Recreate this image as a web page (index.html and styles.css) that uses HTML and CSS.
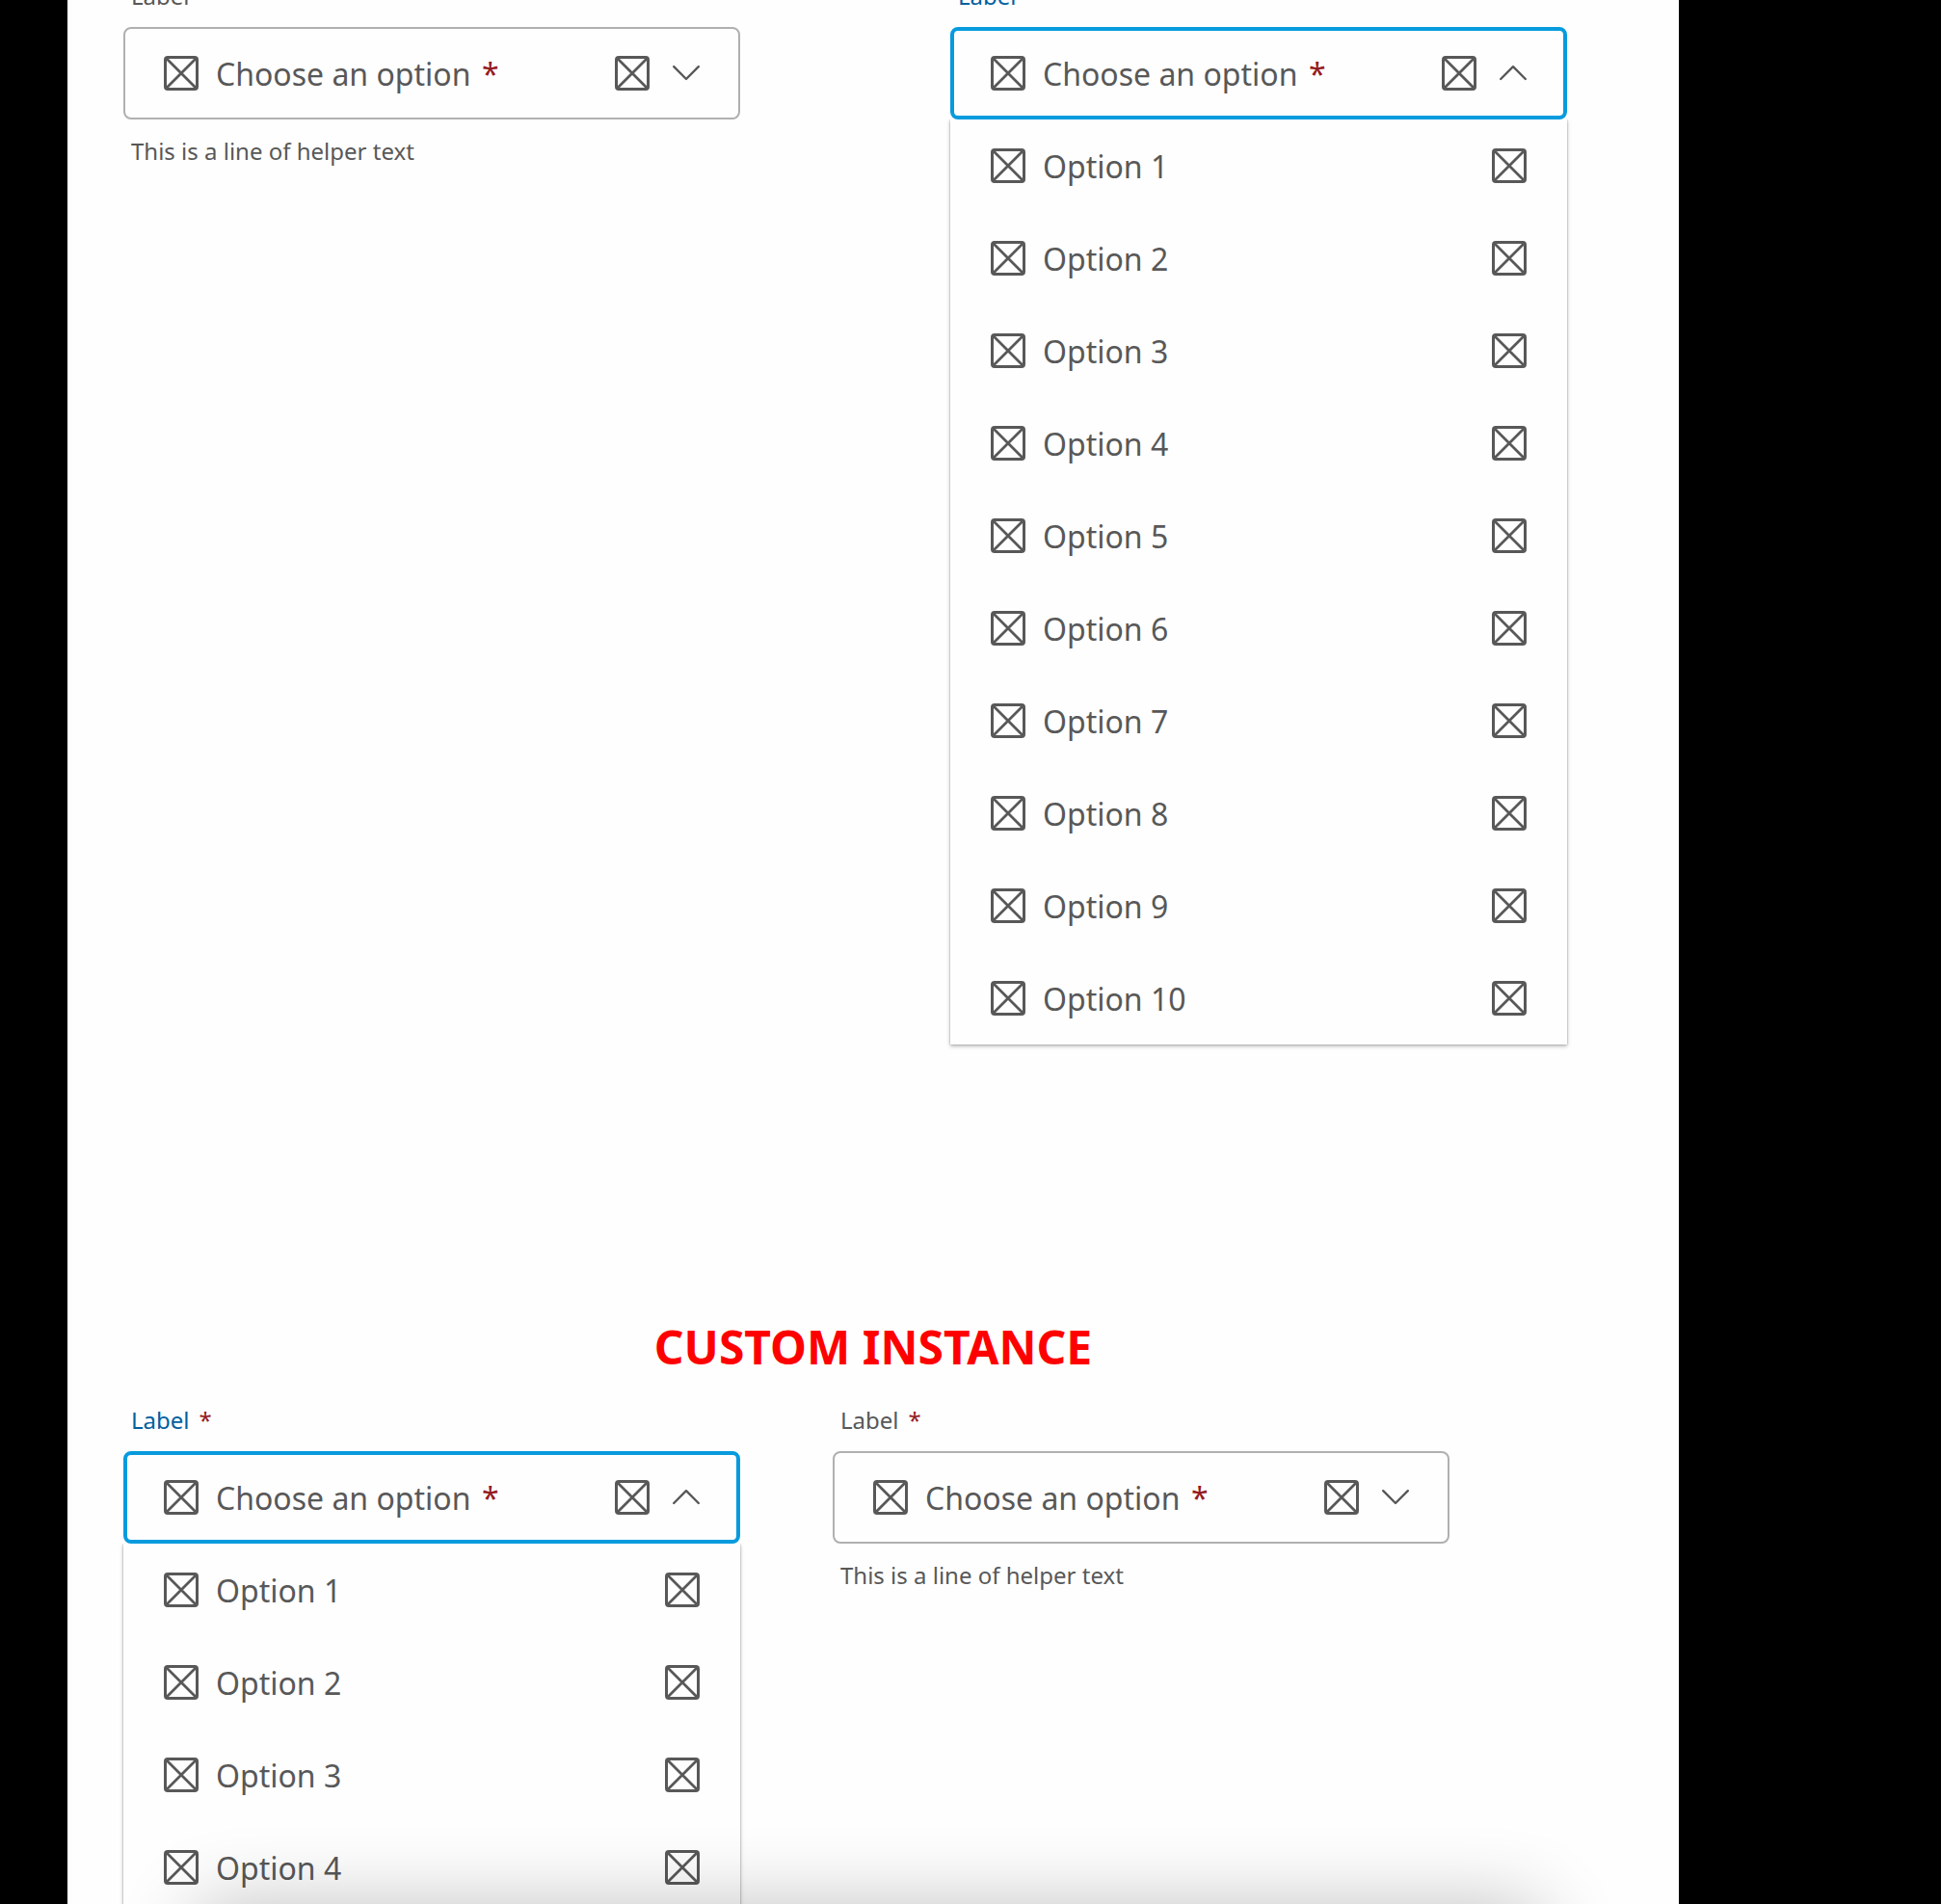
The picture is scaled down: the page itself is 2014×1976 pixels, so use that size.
FILE: index.html
```html
<!DOCTYPE html>
<html lang="en">
<head>
    <meta charset="UTF-8">
    <meta name="viewport" content="width=device-width, initial-scale=1.0">
    <title>Select field</title>
    <link rel="stylesheet" href="styles.css">
</head>
<body>

    <!-- shared icons -->
    <svg class="sprite" aria-hidden="true">
        <symbol id="box" viewBox="0 0 36 36">
            <path d="M2 2l32 32M34 2L2 34" fill="none" stroke="currentColor" stroke-width="2.8"/>
            <rect x="1.5" y="1.5" width="33" height="33" rx="2.5" fill="none" stroke="currentColor" stroke-width="3"/>
        </symbol>
        <symbol id="down" viewBox="0 0 28 36">
            <path d="M1.2 11.2L14 24 26.8 11.2" fill="none" stroke="currentColor" stroke-width="2.4" stroke-linecap="round" stroke-linejoin="round"/>
        </symbol>
        <symbol id="up" viewBox="0 0 28 36">
            <path d="M1.2 24L14 11.2 26.8 24" fill="none" stroke="currentColor" stroke-width="2.4" stroke-linecap="round" stroke-linejoin="round"/>
        </symbol>
    </svg>

    <main class="page">
        <section class="row row-default">
            <div class="field">
                <label for="select-1">Label</label>
                <div class="control">
                    <svg class="icon"><use href="#box"/></svg>
                    <select id="select-1" aria-describedby="help-1" required>
                        <option>Choose an option</option>
                    </select>
                    <span class="required">*</span>
                    <svg class="icon end"><use href="#box"/></svg>
                    <svg class="chevron"><use href="#down"/></svg>
                </div>
                <p class="helper" id="help-1">This is a line of helper text</p>
            </div>

            <div class="field open">
                <label for="select-2">Label</label>
                <div class="control">
                    <svg class="icon"><use href="#box"/></svg>
                    <select id="select-2" required>
                        <option>Choose an option</option>
                    </select>
                    <span class="required">*</span>
                    <svg class="icon end"><use href="#box"/></svg>
                    <svg class="chevron"><use href="#up"/></svg>
                </div>
                <ul class="options" role="listbox">
                    <li role="option"><svg class="icon"><use href="#box"/></svg>Option 1<svg class="icon end"><use href="#box"/></svg></li>
                    <li role="option"><svg class="icon"><use href="#box"/></svg>Option 2<svg class="icon end"><use href="#box"/></svg></li>
                    <li role="option"><svg class="icon"><use href="#box"/></svg>Option 3<svg class="icon end"><use href="#box"/></svg></li>
                    <li role="option"><svg class="icon"><use href="#box"/></svg>Option 4<svg class="icon end"><use href="#box"/></svg></li>
                    <li role="option"><svg class="icon"><use href="#box"/></svg>Option 5<svg class="icon end"><use href="#box"/></svg></li>
                    <li role="option"><svg class="icon"><use href="#box"/></svg>Option 6<svg class="icon end"><use href="#box"/></svg></li>
                    <li role="option"><svg class="icon"><use href="#box"/></svg>Option 7<svg class="icon end"><use href="#box"/></svg></li>
                    <li role="option"><svg class="icon"><use href="#box"/></svg>Option 8<svg class="icon end"><use href="#box"/></svg></li>
                    <li role="option"><svg class="icon"><use href="#box"/></svg>Option 9<svg class="icon end"><use href="#box"/></svg></li>
                    <li role="option"><svg class="icon"><use href="#box"/></svg>Option 10<svg class="icon end"><use href="#box"/></svg></li>
                </ul>
            </div>
        </section>

        <h1>CUSTOM INSTANCE</h1>

        <section class="row row-custom">
            <div class="field open">
                <label for="select-3">Label <span class="required">*</span></label>
                <div class="control">
                    <svg class="icon"><use href="#box"/></svg>
                    <select id="select-3" required>
                        <option>Choose an option</option>
                    </select>
                    <span class="required">*</span>
                    <svg class="icon end"><use href="#box"/></svg>
                    <svg class="chevron"><use href="#up"/></svg>
                </div>
                <ul class="options" role="listbox">
                    <li role="option"><svg class="icon"><use href="#box"/></svg>Option 1<svg class="icon end"><use href="#box"/></svg></li>
                    <li role="option"><svg class="icon"><use href="#box"/></svg>Option 2<svg class="icon end"><use href="#box"/></svg></li>
                    <li role="option"><svg class="icon"><use href="#box"/></svg>Option 3<svg class="icon end"><use href="#box"/></svg></li>
                    <li role="option"><svg class="icon"><use href="#box"/></svg>Option 4<svg class="icon end"><use href="#box"/></svg></li>
                </ul>
            </div>

            <div class="field">
                <label for="select-4">Label <span class="required">*</span></label>
                <div class="control">
                    <svg class="icon"><use href="#box"/></svg>
                    <select id="select-4" aria-describedby="help-4" required>
                        <option>Choose an option</option>
                    </select>
                    <span class="required">*</span>
                    <svg class="icon end"><use href="#box"/></svg>
                    <svg class="chevron"><use href="#down"/></svg>
                </div>
                <p class="helper" id="help-4">This is a line of helper text</p>
            </div>
        </section>

        <div class="bottom-shadow"></div>
    </main>

</body>
</html>
```

FILE: styles.css
```css
* {
    box-sizing: border-box;
}

body {
    margin: 0;
    background-color: #000;
    color: #585858;
    font-family: "Noto Sans", sans-serif;
    font-size: 32px;
}

.sprite {
    display: none;
}

.page {
    position: relative;
    height: 100vh;
    margin: 0 272px 0 70px;
    overflow: hidden;
    background-color: #fefefe;
}

.row {
    display: flex;
    align-items: flex-start;
    padding: 0 58px;
}

/* scrolled a little past the top */
.row-default {
    gap: 218px;
    margin-top: -20px;
}

.row-custom {
    gap: 96px;
}

h1 {
    margin: 282px 0 28px;
    color: #f00;
    font-size: 48px;
    line-height: 64px;
    text-align: center;
}

.field {
    flex: 0 1 640px;
}

label {
    display: flex;
    gap: 10px;
    margin-bottom: 16px;
    padding-left: 8px;
    font-size: 24px;
    line-height: 32px;
}

.control {
    display: flex;
    align-items: center;
    height: 96px;
    padding: 0 40px;
    border: 2px solid #b0b0b0;
    border-radius: 8px;
}

select {
    margin: 0;
    padding: 0;
    border: none;
    outline: none;
    appearance: none;
    background: none;
    color: inherit;
    font: inherit;
}

.required {
    color: #951b1e;
}

.control .required {
    margin-left: 11px;
}

.icon {
    flex: none;
    width: 36px;
    height: 36px;
    margin-right: 18px;
}

.end {
    margin: 0 0 0 auto;
}

.chevron {
    flex: none;
    width: 28px;
    height: 36px;
    margin-left: 24px;
}

.helper {
    margin: 16px 0 0;
    padding-left: 8px;
    font-size: 24px;
    line-height: 34px;
}

.open label {
    color: #00609f;
}

.open label .required {
    color: #951b1e;
}

.open .control {
    padding: 0 38px;
    border: 4px solid #079bde;
}

.options {
    margin: 0;
    padding: 0;
    list-style: none;
    box-shadow: 0 2px 4px rgba(0, 0, 0, 0.25), 0 0 2px rgba(0, 0, 0, 0.3);
    clip-path: inset(0 -10px -10px);
}

.options li {
    display: flex;
    align-items: center;
    height: 96px;
    padding: 0 42px;
}

.bottom-shadow {
    position: absolute;
    top: 100%;
    left: 132px;
    right: 142px;
    height: 200px;
    border-radius: 20px;
    box-shadow: 0 0 80px rgba(0, 0, 0, 0.24);
    pointer-events: none;
}
```
